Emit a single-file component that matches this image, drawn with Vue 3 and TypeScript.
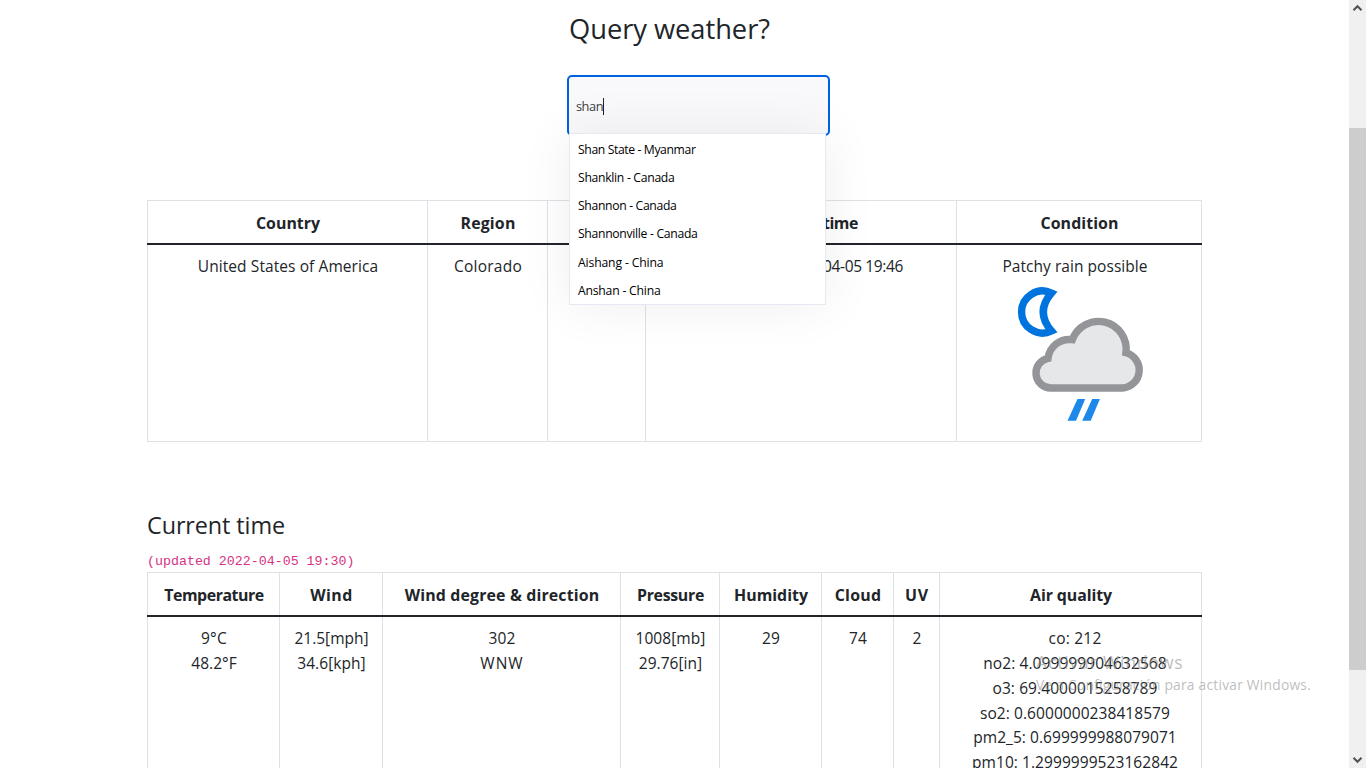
<script setup lang="ts">
import { ref } from 'vue'

interface Label {
  text: string
  width: number
}

interface Column {
  title: Label
  lines: Label[]
  wide?: boolean
}

const label = (text: string, width: number): Label => ({ text, width })

// Spreads the letters of a label so that it takes up the given width.
const vFit = {
  mounted(el: HTMLElement, binding: { value: number }) {
    const natural = el.getBoundingClientRect().width
    const count = Array.from(el.textContent ?? '').length
    if (count > 0) el.style.letterSpacing = `${(binding.value - natural) / count}px`
  },
}

const query = ref('shan')

const suggestions: Label[] = [
  label('Shan State - Myanmar', 117.5),
  label('Shanklin - Canada', 96.5),
  label('Shannon - Canada', 98.5),
  label('Shannonville - Canada', 119.5),
  label('Aishang - China', 85.5),
  label('Anshan - China', 82.5),
]

const airQuality: Label[] = [
  label('co: 212', 53),
  label('no2: 4.099999904632568', 183.5),
  label('o3: 69.4000015258789', 165),
  label('so2: 0.6000000238418579', 190),
  label('pm2_5: 0.699999988079071', 203.5),
  label('pm10: 1.2999999523162842', 206),
]

const current: Column[] = [
  { title: label('Temperature', 99.5), lines: [label('9°C', 26), label('48.2°F', 45.5)] },
  { title: label('Wind', 42.5), lines: [label('21.5[mph]', 74), label('34.6[kph]', 68.5)] },
  { title: label('Wind degree & direction', 194.5), lines: [label('302', 27), label('WNW', 43.5)] },
  { title: label('Pressure', 67), lines: [label('1008[mb]', 70), label('29.76[in]', 63.5)] },
  { title: label('Humidity', 74), lines: [label('29', 18)] },
  { title: label('Cloud', 46.5), lines: [label('74', 18)] },
  { title: label('UV', 24), lines: [label('2', 9)] },
  { title: label('Air quality', 82), lines: airQuality, wide: true },
]
</script>

<template>
  <div class="window">
    <main class="page">
      <h2 class="question"><span v-fit="201">Query weather?</span></h2>

      <div class="search">
        <div class="field">
          <span v-fit="27">{{ query }}</span><i class="caret"></i>
        </div>
        <ul class="suggestions">
          <li v-for="item in suggestions" :key="item.text">
            <span v-fit="item.width">{{ item.text }}</span>
          </li>
        </ul>
      </div>

      <section class="grid place">
        <div class="row head">
          <div class="cell"><span v-fit="64">Country</span></div>
          <div class="cell"><span v-fit="55">Region</span></div>
          <div class="cell"></div>
          <div class="cell time-title"><span v-fit="78">Local time</span></div>
          <div class="cell"><span v-fit="78">Condition</span></div>
        </div>
        <div class="rule"></div>
        <div class="row body">
          <div class="cell"><span v-fit="180.5">United States of America</span></div>
          <div class="cell"><span v-fit="68">Colorado</span></div>
          <div class="cell"></div>
          <div class="cell time"><span v-fit="118.5">2022-04-05 19:46</span></div>
          <div class="cell">
            <span v-fit="145" class="condition-name">Patchy rain possible</span>
            <svg class="condition" width="140" height="150" viewBox="0 0 140 150">
              <path
                d="M43.5 13A21 21 0 1 0 43.5 51Q27 32 43.5 13Z"
                fill="none" stroke="#0074de" stroke-width="7.4"
              />
              <path
                d="M42.7 108A15 15 0 0 1 40 78.3A21.3 21.3 0 0 1 64.3 59.7A27.8 27.8 0 0 1 118 72.7A18 18 0 0 1 114.6 108Z"
                fill="#e6e7e9" stroke="#939598" stroke-width="7.4"
              />
              <path
                d="M69.5 119H77.2L68 140.7H59.5ZM84.2 119H91.9L82.7 140.7H74.2Z"
                fill="#1e88ea"
              />
            </svg>
          </div>
        </div>
      </section>

      <h4 class="subtitle"><span v-fit="138">Current time</span></h4>
      <code class="updated">(updated 2022-04-05 19:30)</code>

      <section class="grid current">
        <div class="row head">
          <div v-for="col in current" :key="col.title.text" class="cell">
            <span v-fit="col.title.width">{{ col.title.text }}</span>
          </div>
        </div>
        <div class="rule"></div>
        <div class="row body">
          <div
            v-for="col in current"
            :key="col.title.text"
            class="cell"
            :class="{ wide: col.wide }"
          >
            <span v-for="line in col.lines" :key="line.text" v-fit="line.width">{{ line.text }}</span>
          </div>
        </div>
      </section>
    </main>

    <aside class="scrollbar">
      <svg width="17" height="17" viewBox="0 0 17 17">
        <path d="M4.5 10.2L8.5 6.2L12.5 10.2" fill="none" stroke="#505050" stroke-width="2" />
      </svg>
      <div class="track"><div class="thumb"></div></div>
      <svg width="17" height="17" viewBox="0 0 17 17">
        <path d="M4.5 6.8L8.5 10.8L12.5 6.8" fill="none" stroke="#505050" stroke-width="2" />
      </svg>
    </aside>

    <div class="activation">
      <div class="activation-title"><span v-fit="147.5">Activar Windows</span></div>
      <div class="activation-hint"><span v-fit="275">Ve a Configuración para activar Windows.</span></div>
    </div>
  </div>
</template>

<style>
body {
  margin: 0;
  overflow: hidden;
  background: #fff;
}
</style>

<style scoped>
.window {
  position: relative;
  display: flex;
  width: 1366px;
  height: 768px;
  overflow: hidden;
  background: #fff;
  color: #212529;
  font-family: "Open Sans", "Noto Sans", sans-serif;
  font-size: 15.5px;
  line-height: 24.85px;
}

.window span {
  white-space: pre;
}

.page {
  box-sizing: border-box;
  flex: 1;
  height: 768px;
  padding: 0 147px;
  overflow: hidden;
}

.question {
  height: 75px;
  margin: 0 0 0 422px;
  font-size: 27.3px;
  font-weight: 400;
  line-height: 57px;
}

.search {
  position: relative;
  width: 263px;
  height: 125px;
  margin-left: 420px;
}

.field {
  box-sizing: border-box;
  display: flex;
  align-items: center;
  height: 61px;
  padding: 2px 7px 0;
  border: 2px solid #0061e0;
  border-radius: 5px;
  background: #f9f9fb;
  color: #3c4043;
  font-size: 12.8px;
}

.caret {
  width: 1px;
  height: 17px;
  background: #222;
}

.suggestions {
  position: absolute;
  z-index: 2;
  top: 58px;
  left: 2px;
  box-sizing: border-box;
  width: 257px;
  height: 172px;
  margin: 0;
  padding: 2px 0 0;
  border: 1px solid #e6e8f2;
  background: #fff;
  box-shadow: 0 0 50px rgba(0, 0, 0, 0.07);
  color: #000;
  font-size: 12.2px;
  line-height: 28.1px;
  list-style: none;
}

.suggestions li {
  height: 28.15px;
  padding-left: 8px;
}

.row {
  display: grid;
  border-left: 1px solid #dee2e6;
}

.place .row {
  grid-template-columns: 280px 120px 98px 311px 245px;
}

.current .row {
  grid-template-columns: 132px 103px 238px 99px 102px 72px 46px 262px;
}

.head {
  box-sizing: border-box;
  height: 43px;
  border-top: 1px solid #dee2e6;
  font-size: 15.9px;
  font-weight: 700;
}

.rule {
  height: 2px;
  background: #212529;
}

.cell {
  display: flex;
  flex-direction: column;
  align-items: center;
  padding-top: 9px;
  padding-left: 1px;
  border-right: 1px solid #dee2e6;
}

.head .cell {
  padding-top: 10px;
}

.cell.time-title {
  align-items: flex-end;
  padding-right: 98px;
}

.cell.time {
  align-items: flex-end;
  padding-right: 53px;
}

.cell.wide {
  padding-left: 9px;
}

.place .body {
  height: 196px;
  border-bottom: 1px solid #dee2e6;
}

.condition-name {
  margin-right: 9px;
}

.condition {
  margin-top: 1px;
  margin-right: 3px;
}

.current .body {
  height: 200px;
}

.subtitle {
  margin: 66px 0 0;
  font-size: 23.4px;
  font-weight: 400;
  line-height: 34px;
}

.updated {
  display: block;
  height: 30px;
  color: #d63384;
  font-family: "Liberation Mono", monospace;
  font-size: 13.3px;
  line-height: 40px;
}

.scrollbar {
  display: flex;
  flex-direction: column;
  width: 17px;
  background: #f0f0f0;
}

.scrollbar svg {
  display: block;
}

.track {
  flex: 1;
  padding-top: 111px;
}

.thumb {
  height: 542px;
  background: #cdcdcd;
}

.activation {
  position: absolute;
  top: 650px;
  left: 1036px;
  color: rgba(140, 140, 140, 0.58);
}

.activation-title {
  font-size: 17.5px;
  line-height: 25px;
}

.activation-hint {
  font-size: 13.8px;
  line-height: 20px;
}
</style>
